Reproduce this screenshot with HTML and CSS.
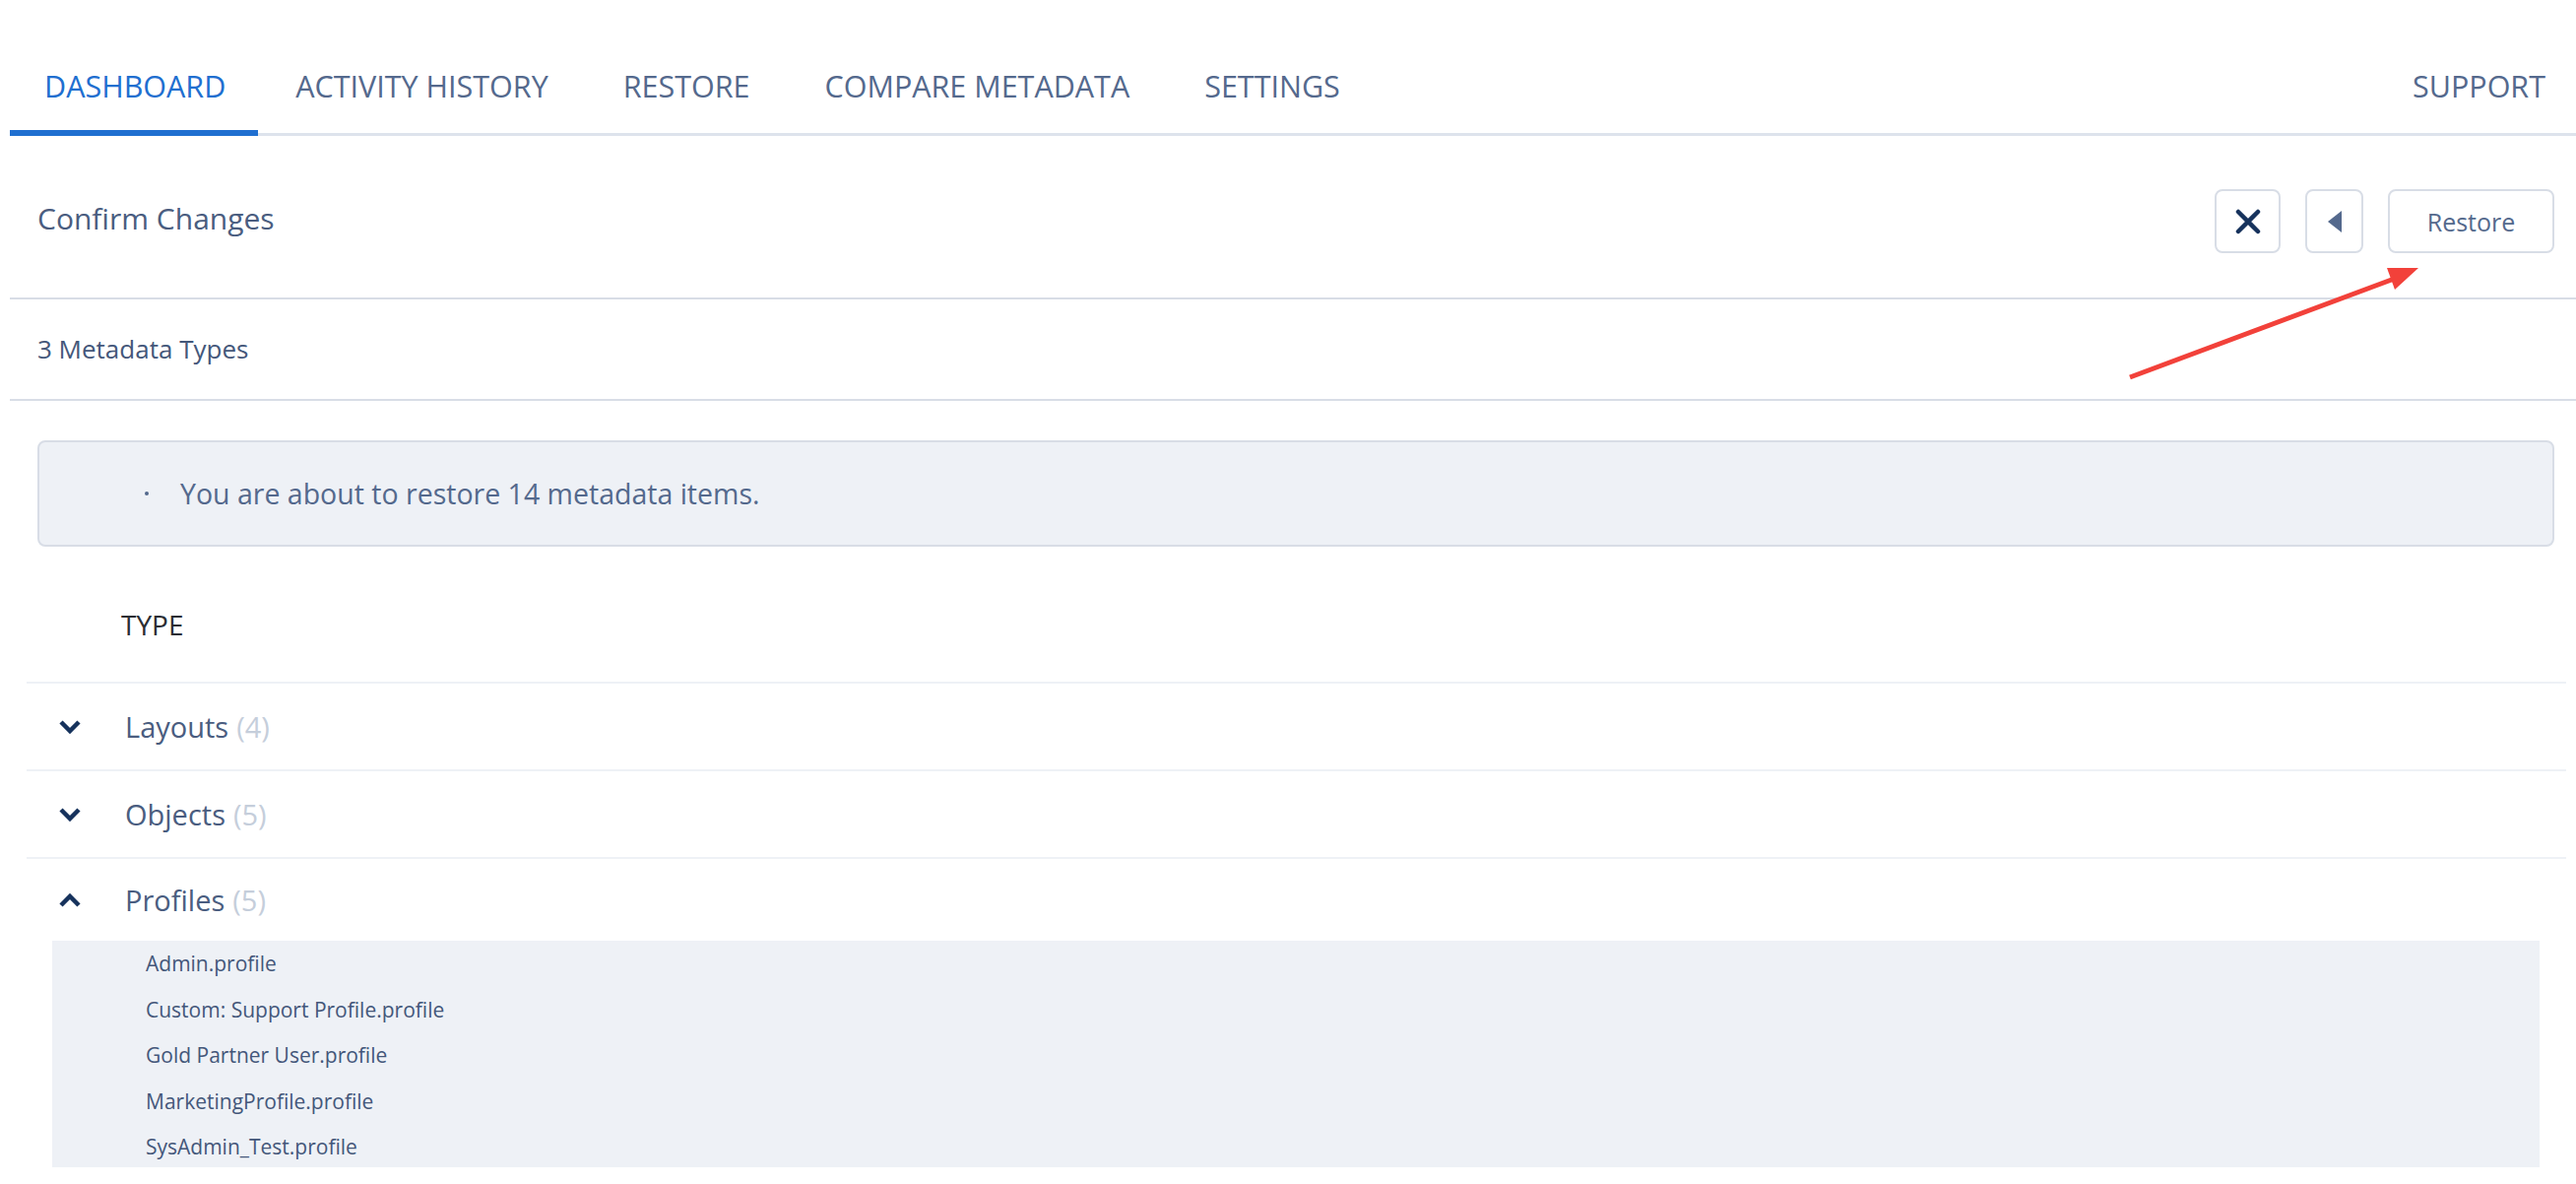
FILE: index.html
```html
<!DOCTYPE html>
<html lang="en">
<head>
    <meta charset="UTF-8">
    <meta name="viewport" content="width=device-width, initial-scale=1.0">
    <title>Confirm Changes</title>
    <link rel="stylesheet" href="styles.css">
</head>
<body>
    <div class="page">
        <nav class="tabs">
            <a class="tab active">DASHBOARD</a>
            <a class="tab">ACTIVITY HISTORY</a>
            <a class="tab">RESTORE</a>
            <a class="tab">COMPARE METADATA</a>
            <a class="tab">SETTINGS</a>
            <a class="tab support">SUPPORT</a>
        </nav>

        <div class="pagehead">
            <h2 class="title">Confirm Changes</h2>
            <div class="actions">
                <button class="btn icon-btn close-btn">
                    <svg width="28" height="28" viewBox="0 0 28 28"><path d="M4 4 L24 24 M24 4 L4 24" stroke="#16325c" stroke-width="4.5" stroke-linecap="round"/></svg>
                </button>
                <button class="btn icon-btn back-btn">
                    <svg width="16" height="24" viewBox="0 0 16 24"><polygon points="15,1 15,23 1,12" fill="#54698d"/></svg>
                </button>
                <button class="btn restore-btn">Restore</button>
            </div>
        </div>

        <div class="subhead">3 Metadata Types</div>

        <div class="notice">
            <span class="dot"></span>
            <span>You are about to restore 14 metadata items.</span>
        </div>

        <div class="typetable">
            <div class="thead">TYPE</div>
            <div class="trow">
                <svg class="chev" width="22" height="16" viewBox="0 0 22 16"><polyline points="2,3 11,12 20,3" fill="none" stroke="#16325c" stroke-width="4.5"/></svg>
                <span class="tname">Layouts</span><span class="count">(4)</span>
            </div>
            <div class="trow">
                <svg class="chev" width="22" height="16" viewBox="0 0 22 16"><polyline points="2,3 11,12 20,3" fill="none" stroke="#16325c" stroke-width="4.5"/></svg>
                <span class="tname">Objects</span><span class="count">(5)</span>
            </div>
            <div class="trow open">
                <svg class="chev" width="22" height="16" viewBox="0 0 22 16"><polyline points="2,13 11,4 20,13" fill="none" stroke="#16325c" stroke-width="4.5"/></svg>
                <span class="tname">Profiles</span><span class="count">(5)</span>
            </div>
            <ul class="items">
                <li>Admin.profile</li>
                <li>Custom: Support Profile.profile</li>
                <li>Gold Partner User.profile</li>
                <li>MarketingProfile.profile</li>
                <li>SysAdmin_Test.profile</li>
            </ul>
        </div>

        <!-- annotation arrow -->
        <svg class="arrow" width="320" height="140" viewBox="0 0 320 140">
            <line x1="13" y1="123" x2="284" y2="22" stroke="#f2413a" stroke-width="5"/>
            <polygon points="306,12 282,34 274,12" fill="#f2413a"/>
        </svg>
    </div>
</body>
</html>
```

FILE: styles.css
```css
body{
    margin: 0;
    background: #fff;
    font-family: "Open Sans", "Liberation Sans", sans-serif;
    color: #54698d;
}
.page{
    position: relative;
    padding-left: 10px;
    min-height: 1202px;
}
.tabs{
    display: flex;
    height: 135px;
    border-bottom: 3px solid #dde3ec;
}
.tab{
    box-sizing: border-box;
    height: 138px;
    padding: 62px 38px 0;
    line-height: 50px;
    font-size: 30.5px;
    color: #54698d;
    cursor: pointer;
}
.tab.active{
    color: #1f6fd0;
    border-bottom: 6px solid #1f6fd0;
    padding-left: 35px;
    padding-right: 33px;
}
.support{
    margin-left: auto;
    padding-right: 31px;
}
.pagehead{
    display: flex;
    align-items: center;
    justify-content: space-between;
    height: 164px;
    padding: 0 22px 0 28px;
    border-bottom: 2px solid #d8dde6;
}
.title{
    margin: 0;
    font-size: 30px;
    font-weight: 400;
    color: #4a5d80;
    padding-top: 2px;
}
.actions{
    display: flex;
    gap: 25px;
    padding-top: 9px;
}
.btn{
    box-sizing: border-box;
    height: 65px;
    background: #fff;
    border: 2px solid #d8dde6;
    border-radius: 8px;
    cursor: pointer;
    font-family: inherit;
}
.icon-btn{
    display: flex;
    align-items: center;
    justify-content: center;
    padding: 0;
}
.close-btn{
    width: 67px;
}
.back-btn{
    width: 59px;
}
.restore-btn{
    width: 169px;
    font-size: 25px;
    color: #54698d;
}
.subhead{
    height: 101px;
    line-height: 101px;
    padding-left: 28px;
    font-size: 26px;
    color: #44577a;
    border-bottom: 2px solid #d8dde6;
}
.notice{
    box-sizing: border-box;
    display: flex;
    align-items: center;
    height: 108px;
    margin: 40px 22px 0 28px;
    padding-left: 107px;
    background: #eef1f6;
    border: 2px solid #d8dde6;
    border-radius: 8px;
    font-size: 28.5px;
    color: #54698d;
}
.dot{
    width: 4px;
    height: 4px;
    background: #54698d;
    border-radius: 50%;
    margin-right: 32px;
}
.typetable{
    margin: 58px 10px 0 17px;
}
.thead{
    line-height: 42px;
    padding: 0 0 37px 96px;
    font-size: 28px;
    color: #2a2d33;
    border-bottom: 2px solid #eef1f6;
}
.trow{
    display: flex;
    align-items: center;
    height: 87px;
    padding-left: 33px;
    border-bottom: 2px solid #eef1f6;
    font-size: 29px;
}
.trow.open{
    height: 83px;
    border-bottom: 0;
}
.chev{
    margin-right: 45px;
}
.tname{
    color: #4a5d80;
    margin-right: 8px;
}
.count{
    color: #c5cedb;
}
.items{
    list-style: none;
    margin: 0 27px 0 26px;
    padding: 0 0 0 95px;
    background: #eef1f6;
    height: 230px;
}
.items li{
    line-height: 46.5px;
    font-size: 21px;
    color: #44577a;
}
.arrow{
    position: absolute;
    left: 2150px;
    top: 260px;
}
```
